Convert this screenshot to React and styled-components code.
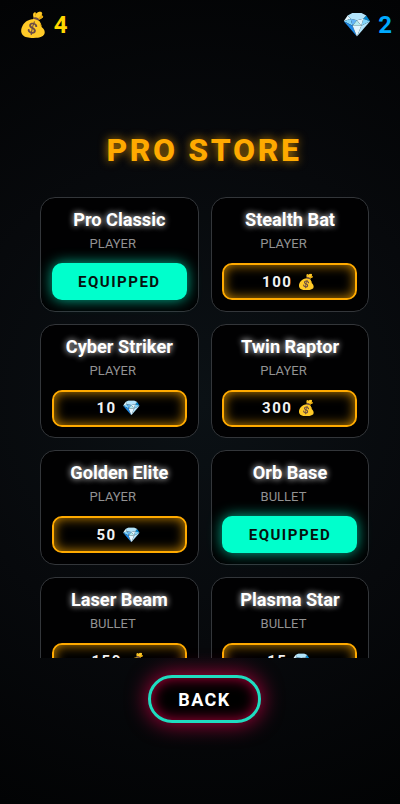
import React from 'react'
import styled, { createGlobalStyle } from 'styled-components'

const GlobalStyle = createGlobalStyle`
  html, body { margin: 0; padding: 0; height: 100%; background: #000; }
  body { font-family: Roboto, "Liberation Sans", "Noto Color Emoji", sans-serif; }
`

const Page = styled.div`
  width: 400px;
  height: 804px;
  display: flex;
  flex-direction: column;
  overflow: hidden;
  background: radial-gradient(circle at 50% 50%, #0b1115 0%, #07090c 55%, #020304 100%);
`

const TopBar = styled.div`
  height: 52px;
  box-sizing: border-box;
  padding: 11px 8px 0 18px;
  display: flex;
  justify-content: space-between;
  align-items: flex-start;
`

const Wallet = styled.div`
  display: flex;
  align-items: center;
  gap: 4px;
  font-size: 24px;
  line-height: 28px;
  font-weight: 700;
  color: ${p => p.$color};
`

const Title = styled.h1`
  margin: 79px 0 0;
  height: 38px;
  padding-left: 8px;
  font-size: 32px;
  line-height: 38px;
  font-weight: 800;
  letter-spacing: 2.6px;
  text-align: center;
  color: #ffaa00;
  text-shadow: 0 0 10px rgba(255, 170, 0, 0.75);
`

const Scroller = styled.div`
  margin-top: 28px;
  height: 461px;
  overflow: hidden;
  padding: 0 31px 0 40px;
`

const Grid = styled.div`
  display: grid;
  grid-template-columns: 158.67px 158.67px;
  column-gap: 12px;
  row-gap: 12px;
`

const Card = styled.div`
  height: 114.67px;
  box-sizing: border-box;
  border: 1px solid #33363a;
  border-radius: 15px;
  background: #010102;
  padding: 11px 11px 0;
  display: flex;
  flex-direction: column;
  align-items: center;
`

const Name = styled.div`
  font-size: 18.2px;
  line-height: 22px;
  font-weight: 700;
  color: #fff;
  white-space: nowrap;
  text-shadow: 0 0 6px rgba(255, 255, 255, 1);
`

const Kind = styled.div`
  margin: 5px 13px 0 0;
  font-size: 13px;
  line-height: 16px;
  color: #929292;
`

const Action = styled.div`
  margin-top: 11px;
  width: 135px;
  height: 37px;
  flex-shrink: 0;
  box-sizing: border-box;
  border-radius: 10px;
  display: flex;
  align-items: center;
  justify-content: center;
  font-size: 15px;
  font-weight: 700;
  letter-spacing: 1.5px;
  white-space: pre;
  ${p => p.$equipped ? `
    background: #00ffcc;
    color: #06130f;
    box-shadow: 0 0 14px rgba(0, 255, 204, 0.7);
  ` : `
    background: #000;
    color: #f2f2f2;
    border: 2.5px solid #ffaa00;
    box-shadow: inset 0 0 12px rgba(255, 170, 0, 0.8);
  `}
`

const Footer = styled.div`
  flex: 1;
  padding: 17px 0 0 9px;
  display: flex;
  justify-content: center;
  align-items: flex-start;
`

const BackButton = styled.button`
  width: 113px;
  height: 48px;
  box-sizing: border-box;
  border: 3px solid #1fdcc0;
  border-radius: 24px;
  background: #000;
  color: #fff;
  font-family: inherit;
  font-size: 18px;
  font-weight: 700;
  letter-spacing: 1.5px;
  box-shadow: 0 0 22px rgba(255, 0, 85, 0.75), inset 0 0 14px rgba(255, 0, 85, 0.7);
`

const items = [
  { name: 'Pro Classic', kind: 'PLAYER', equipped: true },
  { name: 'Stealth Bat', kind: 'PLAYER', price: '100 💰' },
  { name: 'Cyber Striker', kind: 'PLAYER', price: '10 💎' },
  { name: 'Twin Raptor', kind: 'PLAYER', price: '300 💰' },
  { name: 'Golden Elite', kind: 'PLAYER', price: '50 💎' },
  { name: 'Orb Base', kind: 'BULLET', equipped: true },
  { name: 'Laser Beam', kind: 'BULLET', price: '150 💰' },
  { name: 'Plasma Star', kind: 'BULLET', price: '15 💎' },
]

export default function App() {
  return (
    <Page>
      <GlobalStyle />
      <TopBar>
        <Wallet $color="#ffd700">💰 4</Wallet>
        <Wallet $color="#00aaff">💎 2</Wallet>
      </TopBar>
      <Title>PRO STORE</Title>
      <Scroller>
        <Grid>
          {items.map((item, i) => (
            <Card key={i}>
              <Name>{item.name}</Name>
              <Kind>{item.kind}</Kind>
              <Action $equipped={item.equipped}>
                {item.equipped ? 'EQUIPPED' : item.price}
              </Action>
            </Card>
          ))}
        </Grid>
      </Scroller>
      <Footer>
        <BackButton>BACK</BackButton>
      </Footer>
    </Page>
  )
}
